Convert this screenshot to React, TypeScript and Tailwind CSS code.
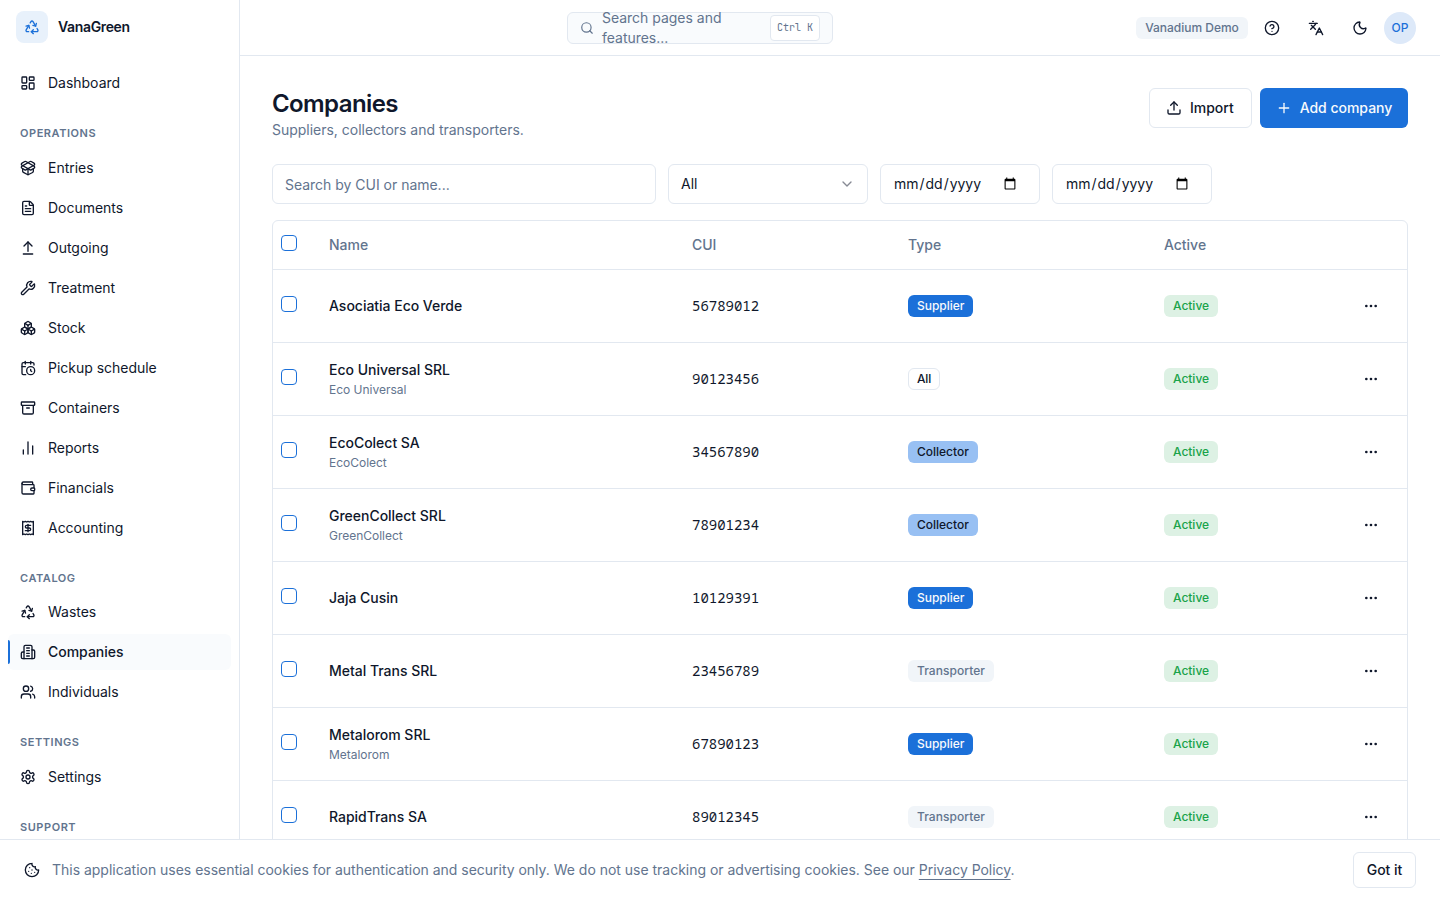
import { useState } from 'react';
import {
  Archive,
  ArrowUpFromLine,
  Boxes,
  CalendarClock,
  ChartNoAxesColumn,
  ChevronDown,
  CircleQuestionMark,
  Cookie,
  Ellipsis,
  FileText,
  Languages,
  LayoutDashboard,
  Moon,
  PackageOpen,
  Plus,
  Receipt,
  Recycle,
  Search,
  Upload,
  Users,
  Wallet,
  Wrench,
} from 'lucide-react';

type CompanyType = 'Supplier' | 'Collector' | 'Transporter' | 'All';

type Company = {
  name: string;
  shortName?: string;
  cui: string;
  type: CompanyType;
};

const COMPANIES: Company[] = [
  { name: 'Asociatia Eco Verde', cui: '56789012', type: 'Supplier' },
  { name: 'Eco Universal SRL', shortName: 'Eco Universal', cui: '90123456', type: 'All' },
  { name: 'EcoColect SA', shortName: 'EcoColect', cui: '34567890', type: 'Collector' },
  { name: 'GreenCollect SRL', shortName: 'GreenCollect', cui: '78901234', type: 'Collector' },
  { name: 'Jaja Cusin', cui: '10129391', type: 'Supplier' },
  { name: 'Metal Trans SRL', cui: '23456789', type: 'Transporter' },
  { name: 'Metalorom SRL', shortName: 'Metalorom', cui: '67890123', type: 'Supplier' },
  { name: 'RapidTrans SA', cui: '89012345', type: 'Transporter' },
];

const TYPE_STYLES: Record<CompanyType, string> = {
  Supplier: 'border-transparent bg-[#1b70d9] text-slate-50',
  Collector: 'border-transparent bg-[#98c0f3] text-slate-900',
  Transporter: 'border-transparent bg-slate-100 text-slate-500 tracking-[0.05px]',
  All: 'border-slate-200 text-slate-900 tracking-[-0.15px]',
};

type IconProps = { className?: string };

const BuildingIcon = ({ className }: IconProps) => (
  <svg
    className={className}
    viewBox="0 0 24 24"
    fill="none"
    stroke="currentColor"
    strokeWidth="2"
    strokeLinecap="round"
    strokeLinejoin="round"
  >
    <path d="M6 22V4a2 2 0 0 1 2-2h8a2 2 0 0 1 2 2v18Z" />
    <path d="M6 12H4a2 2 0 0 0-2 2v6a2 2 0 0 0 2 2h2" />
    <path d="M18 9h2a2 2 0 0 1 2 2v9a2 2 0 0 1-2 2h-2" />
    <path d="M10 6h4M10 10h4M10 14h4M10 18h4" />
  </svg>
);

const GearIcon = ({ className }: IconProps) => (
  <svg
    className={className}
    viewBox="0 0 24 24"
    fill="none"
    stroke="currentColor"
    strokeWidth="2"
    strokeLinecap="round"
    strokeLinejoin="round"
  >
    <path d="M12.22 2h-.44a2 2 0 0 0-2 2v.18a2 2 0 0 1-1 1.73l-.43.25a2 2 0 0 1-2 0l-.15-.08a2 2 0 0 0-2.73.73l-.22.38a2 2 0 0 0 .73 2.73l.15.1a2 2 0 0 1 1 1.72v.51a2 2 0 0 1-1 1.74l-.15.09a2 2 0 0 0-.73 2.73l.22.38a2 2 0 0 0 2.73.73l.15-.08a2 2 0 0 1 2 0l.43.25a2 2 0 0 1 1 1.73V20a2 2 0 0 0 2 2h.44a2 2 0 0 0 2-2v-.18a2 2 0 0 1 1-1.73l.43-.25a2 2 0 0 1 2 0l.15.08a2 2 0 0 0 2.73-.73l.22-.39a2 2 0 0 0-.73-2.73l-.15-.08a2 2 0 0 1-1-1.74v-.5a2 2 0 0 1 1-1.74l.15-.09a2 2 0 0 0 .73-2.73l-.22-.38a2 2 0 0 0-2.73-.73l-.15.08a2 2 0 0 1-2 0l-.43-.25a2 2 0 0 1-1-1.73V4a2 2 0 0 0-2-2z" />
    <circle cx="12" cy="12" r="3" />
  </svg>
);

const NAV_SECTIONS = [
  {
    title: 'Operations',
    items: [
      { label: 'Entries', icon: PackageOpen },
      { label: 'Documents', icon: FileText },
      { label: 'Outgoing', icon: ArrowUpFromLine },
      { label: 'Treatment', icon: Wrench },
      { label: 'Stock', icon: Boxes },
      { label: 'Pickup schedule', icon: CalendarClock },
      { label: 'Containers', icon: Archive },
      { label: 'Reports', icon: ChartNoAxesColumn },
      { label: 'Financials', icon: Wallet },
      { label: 'Accounting', icon: Receipt },
    ],
  },
  {
    title: 'Catalog',
    items: [
      { label: 'Wastes', icon: Recycle },
      { label: 'Companies', icon: BuildingIcon },
      { label: 'Individuals', icon: Users },
    ],
  },
  { title: 'Settings', items: [{ label: 'Settings', icon: GearIcon }] },
  { title: 'Support', items: [] },
];

type NavItemProps = {
  label: string;
  icon: React.ComponentType<IconProps>;
  active?: boolean;
};

const NavItem = ({ label, icon: Icon, active }: NavItemProps) => (
  <a
    href="#"
    className={`relative flex h-9 shrink-0 items-center gap-3 rounded-md px-3 text-sm ${
      active ? 'bg-[#f9fbfd] font-medium' : ''
    }`}
  >
    {active && <span className="absolute top-1.5 left-0 h-6 w-0.5 rounded-r-full bg-[#1b70d9]" />}
    <Icon className="size-4 shrink-0" />
    {label}
  </a>
);

const Sidebar = () => (
  <aside className="flex w-60 shrink-0 flex-col overflow-hidden border-r border-slate-200">
    <div className="flex h-[54px] shrink-0 items-center gap-2.5 px-4">
      <div className="flex size-8 items-center justify-center rounded-lg bg-[#e8f1fb] text-[#1b70d9]">
        <Recycle className="size-4" />
      </div>
      <span className="text-sm font-semibold tracking-tight">VanaGreen</span>
    </div>
    <nav className="flex flex-col px-2 pt-[11px]">
      <NavItem label="Dashboard" icon={LayoutDashboard} />
      {NAV_SECTIONS.map((section) => (
        <div key={section.title} className="mt-4 flex flex-col">
          <div className="px-3 py-2 text-[11px] leading-[16.5px] font-semibold tracking-wider text-slate-500 uppercase">
            {section.title}
          </div>
          <div className="flex flex-col gap-1">
            {section.items.map((item) => (
              <NavItem
                key={item.label}
                label={item.label}
                icon={item.icon}
                active={item.label === 'Companies'}
              />
            ))}
          </div>
        </div>
      ))}
    </nav>
  </aside>
);

const TopBar = () => (
  <header className="flex h-14 shrink-0 items-center border-b border-slate-200 px-6">
    <div className="flex flex-1 justify-center">
      <button className="flex h-8 w-[266px] items-center gap-2 rounded-md border border-slate-200 bg-[#f9fbfd] px-3 text-left text-sm text-slate-500">
        <Search className="size-3.5 shrink-0" />
        <span className="flex-1">Search pages and features...</span>
        <kbd className="rounded border border-slate-200 bg-white px-1.5 py-1 font-['JetBrains_Mono','Noto_Sans_Mono','DejaVu_Sans_Mono',monospace] text-[10px] leading-4">
          Ctrl K
        </kbd>
      </button>
    </div>
    <div className="flex items-center">
      <span className="mr-1.5 flex h-[22px] w-28 items-center justify-center rounded-md bg-slate-100 text-xs font-medium text-slate-500">
        Vanadium Demo
      </span>
      <div className="flex items-center gap-2">
        <button className="flex size-9 items-center justify-center">
          <CircleQuestionMark className="size-4" />
        </button>
        <button className="flex size-9 items-center justify-center">
          <Languages className="size-4" />
        </button>
        <button className="flex size-9 items-center justify-center">
          <Moon className="size-4" />
        </button>
      </div>
      <div className="ml-1.5 flex size-8 items-center justify-center rounded-full bg-[#dde9f9] text-xs font-medium text-[#1b70d9]">
        OP
      </div>
    </div>
  </header>
);

type CheckboxProps = { checked: boolean; onChange: () => void };

const Checkbox = ({ checked, onChange }: CheckboxProps) => (
  <button
    role="checkbox"
    aria-checked={checked}
    onClick={onChange}
    className={`mb-1 block size-4 rounded-[4px] border border-[#1b70d9] ${
      checked ? 'bg-[#1b70d9]' : ''
    }`}
  />
);

const CookieBanner = ({ onClose }: { onClose: () => void }) => (
  <div className="fixed inset-x-0 bottom-0 flex h-[61px] items-center gap-3 border-t border-slate-200 bg-white px-6">
    <Cookie className="size-4 shrink-0" />
    <p className="flex-1 text-sm text-slate-500">
      This application uses essential cookies for authentication and security only. We do not use
      tracking or advertising cookies. See our{' '}
      <a href="#" className="underline underline-offset-4">
        Privacy Policy
      </a>
      .
    </p>
    <button
      onClick={onClose}
      className="h-9 w-[63px] rounded-md border border-slate-200 text-sm font-medium"
    >
      Got it
    </button>
  </div>
);

export default function App() {
  const [query, setQuery] = useState('');
  const [selected, setSelected] = useState<string[]>([]);
  const [showCookies, setShowCookies] = useState(true);

  const companies = COMPANIES.filter(
    (c) => c.name.toLowerCase().includes(query.toLowerCase()) || c.cui.includes(query)
  );

  const toggle = (cui: string) => {
    setSelected((prev) => (prev.includes(cui) ? prev.filter((id) => id !== cui) : [...prev, cui]));
  };

  const allSelected = companies.length > 0 && selected.length === companies.length;

  return (
    <div className="flex h-screen overflow-hidden bg-white font-[Inter,sans-serif] tracking-[-0.018px] text-slate-900">
      <Sidebar />
      <div className="flex min-w-0 flex-1 flex-col">
        <TopBar />
        <main className="flex-1 overflow-hidden p-8">
          <div className="flex items-start justify-between">
            <div>
              <h1 className="text-2xl font-semibold tracking-tight">Companies</h1>
              <p className="text-sm text-slate-500">Suppliers, collectors and transporters.</p>
            </div>
            <div className="flex gap-2 text-sm font-medium">
              <button className="flex h-10 w-[103px] items-center gap-2 rounded-md border border-slate-200 pl-4">
                <Upload className="size-4" />
                Import
              </button>
              <button className="flex h-10 w-[148px] items-center justify-center gap-2 rounded-md bg-[#1b70d9] text-slate-50">
                <Plus className="size-4" />
                Add company
              </button>
            </div>
          </div>

          <div className="mt-6 flex gap-3 text-sm">
            <input
              value={query}
              onChange={(e) => setQuery(e.target.value)}
              placeholder="Search by CUI or name..."
              className="h-10 w-96 rounded-md border border-slate-200 px-3 placeholder:text-slate-500"
            />
            <button className="flex h-10 w-[200px] items-center justify-between rounded-md border border-slate-200 px-3">
              All
              <ChevronDown className="size-4 opacity-50" />
            </button>
            <input type="date" className="h-10 w-40 rounded-md border border-slate-200 pr-5 pl-3" />
            <input type="date" className="h-10 w-40 rounded-md border border-slate-200 pr-5 pl-3" />
          </div>

          <div className="mt-4 rounded-md border border-slate-200">
            <table className="w-full table-fixed text-left text-sm">
              <colgroup>
                <col className="w-12" />
                <col className="w-[363px]" />
                <col className="w-[216px]" />
                <col className="w-64" />
                <col />
                <col className="w-[72px]" />
              </colgroup>
              <thead>
                <tr className="h-12 border-b border-slate-200 text-slate-500">
                  <th className="px-2">
                    <Checkbox
                      checked={allSelected}
                      onChange={() => setSelected(allSelected ? [] : companies.map((c) => c.cui))}
                    />
                  </th>
                  <th className="px-2 font-medium">Name</th>
                  <th className="px-2 font-medium">CUI</th>
                  <th className="px-2 font-medium">Type</th>
                  <th className="px-2 font-medium">Active</th>
                  <th />
                </tr>
              </thead>
              <tbody>
                {companies.map((company) => (
                  <tr key={company.cui} className="h-[73px] border-b border-slate-200">
                    <td className="px-2">
                      <Checkbox
                        checked={selected.includes(company.cui)}
                        onChange={() => toggle(company.cui)}
                      />
                    </td>
                    <td className="px-2 font-medium">
                      {company.name}
                      {company.shortName && (
                        <div className="mt-0.5 text-xs font-normal text-slate-500">
                          {company.shortName}
                        </div>
                      )}
                    </td>
                    <td className="px-2 font-['Noto_Sans_Mono','DejaVu_Sans_Mono',monospace]">
                      {company.cui}
                    </td>
                    <td className="px-2">
                      <span
                        className={`inline-flex rounded-md border px-2 py-0.5 text-xs font-medium ${TYPE_STYLES[company.type]}`}
                      >
                        {company.type}
                      </span>
                    </td>
                    <td className="px-2">
                      <span className="inline-flex rounded-md border border-transparent bg-[#ddf1e4] px-2 py-0.5 text-xs font-medium text-[#19a34a]">
                        Active
                      </span>
                    </td>
                    <td>
                      <button className="ml-4 flex size-10 items-center justify-center">
                        <Ellipsis className="size-4" />
                      </button>
                    </td>
                  </tr>
                ))}
              </tbody>
            </table>
          </div>
        </main>
      </div>
      {showCookies && <CookieBanner onClose={() => setShowCookies(false)} />}
    </div>
  );
}
